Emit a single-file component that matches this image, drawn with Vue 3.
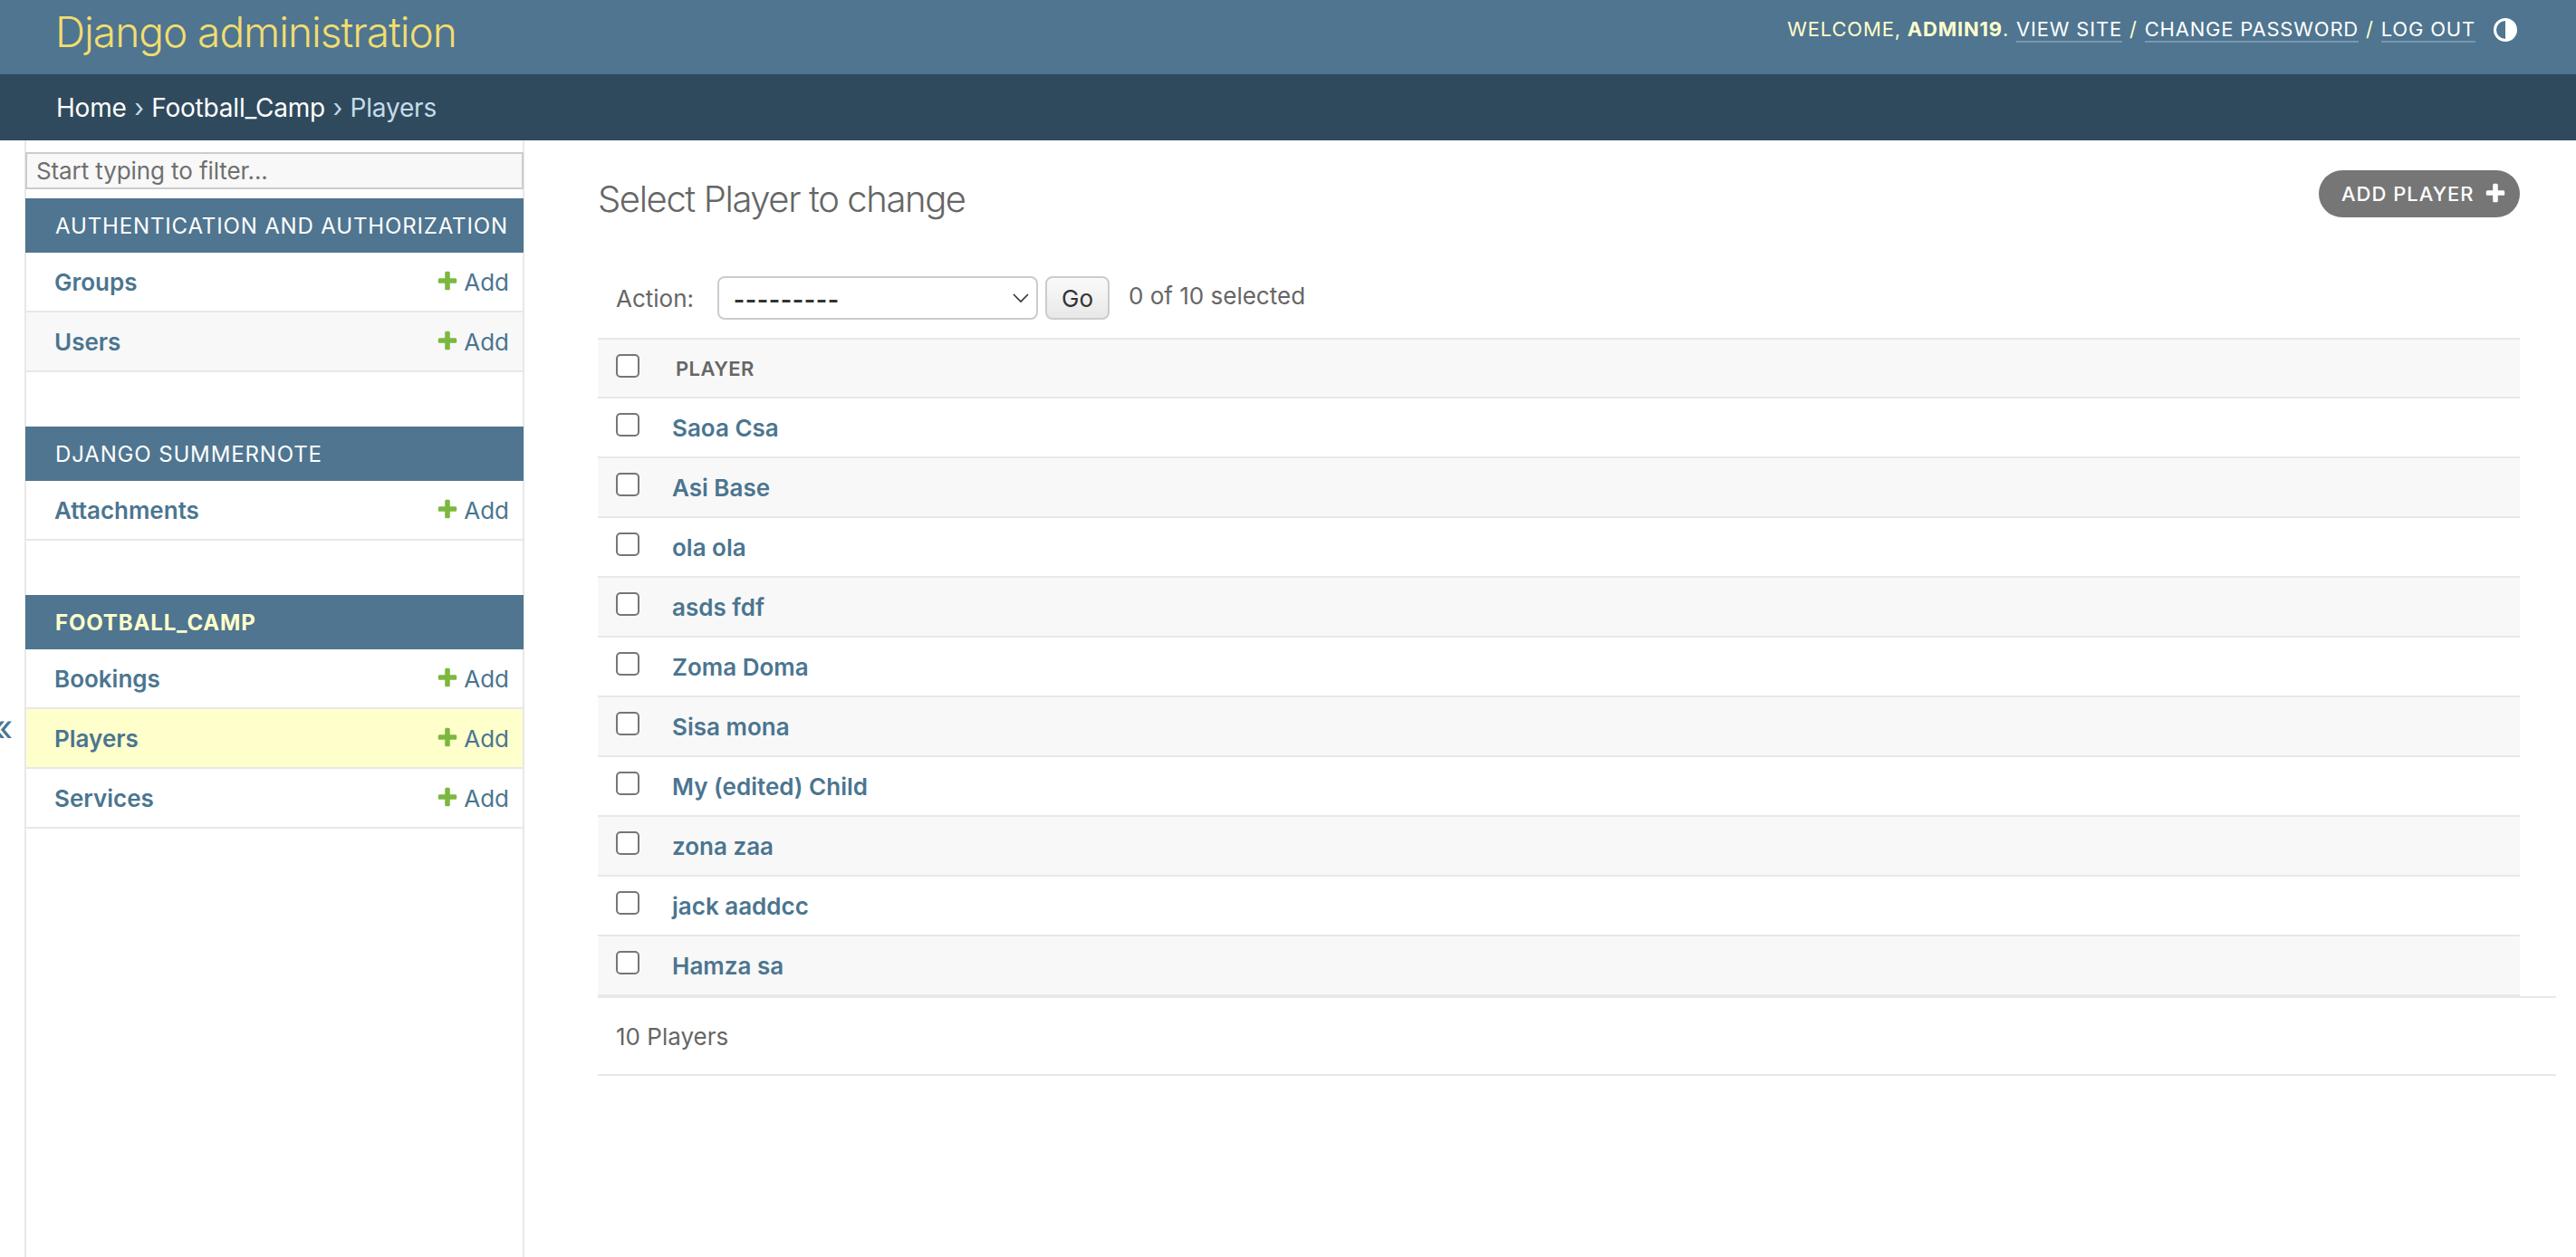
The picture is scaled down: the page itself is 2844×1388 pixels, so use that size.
<template>
  <header class="top">
    <div class="branding">Django administration</div>
    <div class="user-tools">
      <span>Welcome, <strong>admin19</strong>.</span>
      <a class="tool" href="#">View site</a>
      <span>/</span>
      <a class="tool" href="#">Change password</a>
      <span>/</span>
      <a class="tool" href="#">Log out</a>
      <svg class="theme" viewBox="0 0 26 26">
        <circle cx="13" cy="13" r="11.5" fill="none" stroke="#fff" stroke-width="3" />
        <path d="M13 1.5a11.5 11.5 0 0 1 0 23z" fill="#fff" />
      </svg>
    </div>
  </header>
  <nav class="crumbs">
    <a href="#">Home</a><span class="sep">›</span><a href="#">Football_Camp</a><span class="sep">›</span>Players
  </nav>
  <div class="page">
    <div class="toggle">«</div>
    <aside class="sidebar">
      <input class="filter" placeholder="Start typing to filter..." />
      <section v-for="app in apps" :key="app.name" class="app">
        <div class="caption" :class="{ current: app.current }">{{ app.name }}</div>
        <div
          v-for="(model, i) in app.models"
          :key="model"
          class="model"
          :class="{ alt: app.striped && i % 2 === 1, selected: model === 'Players' }"
        >
          <a class="model-name" href="#">{{ model }}</a>
          <a class="add" href="#">
            <svg viewBox="0 0 1792 1792"><path fill="#7cb83f" :d="plus" /></svg>
            Add
          </a>
        </div>
      </section>
    </aside>
    <main class="content">
      <div class="list">
        <div class="title-row">
          <h1>Select Player to change</h1>
          <a class="add-player" href="#">
            Add Player
            <svg viewBox="0 0 1792 1792"><path fill="#fff" :d="plus" /></svg>
          </a>
        </div>
        <div class="actions">
          <label>Action:</label>
          <select class="action-select"><option>---------</option></select>
          <button class="go">Go</button>
          <span class="counter">0 of 10 selected</span>
        </div>
        <table class="players">
          <thead>
            <tr>
              <th class="check"><input type="checkbox" /></th>
              <th class="name">Player</th>
            </tr>
          </thead>
          <tbody>
            <tr v-for="(player, i) in players" :key="player" :class="{ alt: i % 2 === 1 }">
              <td class="check"><input type="checkbox" /></td>
              <td><a href="#">{{ player }}</a></td>
            </tr>
          </tbody>
        </table>
      </div>
      <p class="paginator">10 Players</p>
    </main>
  </div>
</template>

<script setup>
const plus = 'M1600 736v192q0 40-28 68t-68 28h-416v416q0 40-28 68t-68 28h-192q-40 0-68-28t-28-68v-416h-416q-40 0-68-28t-28-68v-192q0-40 28-68t68-28h416v-416q0-40 28-68t68-28h192q40 0 68 28t28 68v416h416q40 0 68 28t28 68z'

const apps = [
  { name: 'Authentication and Authorization', models: ['Groups', 'Users'], striped: true },
  { name: 'Django Summernote', models: ['Attachments'] },
  { name: 'Football_Camp', models: ['Bookings', 'Players', 'Services'], current: true },
]

const players = [
  'Saoa Csa',
  'Asi Base',
  'ola ola',
  'asds fdf',
  'Zoma Doma',
  'Sisa mona',
  'My (edited) Child',
  'zona zaa',
  'jack aaddcc',
  'Hamza sa',
]
</script>

<style>
html, body {
  background: #fff;
}
</style>

<style scoped>
* {
  box-sizing: border-box;
}

a {
  color: #4b7590;
  text-decoration: none;
}

.top {
  height: 82px;
  background: #4f7590;
  display: flex;
  justify-content: space-between;
  padding: 0 65px 0 61px;
  font-family: Inter, "Liberation Sans", sans-serif;
}

.branding {
  font-size: 46px;
  font-weight: 300;
  letter-spacing: -1px;
  line-height: 70px;
  color: #f2dd6e;
}

.user-tools {
  display: flex;
  align-items: flex-start;
  gap: 8px;
  padding-top: 19px;
  font-size: 22px;
  line-height: 26px;
  letter-spacing: 0.8px;
  text-transform: uppercase;
  color: #ffffcc;
  white-space: nowrap;
}

.user-tools strong {
  font-weight: 700;
}

.tool {
  color: #fff;
  border-bottom: 2px solid rgba(255, 255, 255, 0.25);
  height: 28px;
}

.theme {
  width: 26px;
  height: 26px;
  margin-left: 12px;
  margin-top: 1px;
}

.crumbs {
  height: 73px;
  background: #2f4a5d;
  padding-left: 62px;
  line-height: 75px;
  font-family: Inter, "Liberation Sans", sans-serif;
  font-size: 28px;
  letter-spacing: -0.2px;
  color: #c4dce8;
}

.crumbs a {
  color: #fff;
}

.sep {
  margin: 0 8.5px;
}

.page {
  display: flex;
  min-height: 1233px;
  font-family: Inter, "Liberation Sans", sans-serif;
}

.toggle {
  width: 27px;
  flex: none;
  padding-top: 625px;
  font-size: 40px;
  line-height: 48px;
  color: #4b7590;
  overflow: hidden;
  text-indent: -9px;
}

.sidebar {
  width: 552px;
  flex: none;
  border-left: 2px solid #e8e8e8;
  border-right: 2px solid #e8e8e8;
  padding-top: 13px;
}

.filter {
  display: block;
  width: 550px;
  height: 41px;
  margin: 0 0 10px -1px;
  padding: 0 10px;
  border: 2px solid #ccc;
  background: #f8f8f8;
  font-family: inherit;
  font-size: 26px;
  letter-spacing: -0.1px;
  color: #666;
  border-radius: 0;
  outline: none;
}

.filter::placeholder {
  color: #6f6f6f;
  opacity: 1;
}

.app {
  margin-bottom: 60px;
}

.caption {
  height: 60px;
  margin: 0 -1px 0 -1px;
  padding-left: 33px;
  background: #4f7590;
  color: #fff;
  font-size: 24px;
  line-height: 62px;
  letter-spacing: 0.85px;
  text-transform: uppercase;
  white-space: nowrap;
}

.caption.current {
  color: #ffffcc;
  font-weight: 700;
}

.model {
  height: 66px;
  display: flex;
  justify-content: space-between;
  align-items: center;
  padding: 0 15px 0 31px;
  border-bottom: 2px solid #e8e8e8;
  font-size: 26px;
}

.model.alt {
  background: #f8f8f8;
}

.model.selected {
  background: #ffffcc;
}

.model-name {
  font-weight: 600;
}

.add {
  display: flex;
  align-items: center;
  gap: 5px;
}

.add svg {
  width: 26px;
  height: 26px;
}

.content {
  flex: 1;
  min-width: 0;
  padding: 33px 22px 0 81px;
  color: #666;
}

.list {
  padding-right: 40px;
}

.title-row {
  display: flex;
  justify-content: space-between;
  align-items: flex-start;
  height: 117px;
}

h1 {
  margin: 0;
  font-size: 40px;
  font-weight: 300;
  letter-spacing: -1.4px;
  line-height: 64px;
  color: #666;
}

.add-player {
  height: 52px;
  width: 222px;
  display: flex;
  align-items: center;
  justify-content: space-between;
  padding: 0 14px 0 25px;
  border-radius: 26px;
  background: #767676;
  color: #fff;
  font-size: 22px;
  font-weight: 500;
  letter-spacing: 1px;
  text-transform: uppercase;
}

.add-player svg {
  width: 26px;
  height: 26px;
}

.actions {
  display: flex;
  align-items: center;
  height: 48px;
  margin-bottom: 20px;
  font-size: 26px;
}

.actions label {
  margin-left: 20px;
  width: 112px;
}

.action-select {
  appearance: none;
  width: 354px;
  height: 48px;
  padding: 0 16px;
  border: 2px solid #ccc;
  border-radius: 8px;
  background: #fff url("data:image/svg+xml,%3Csvg xmlns='http://www.w3.org/2000/svg' width='18' height='12'%3E%3Cpath d='M1 2l8 8 8-8' fill='none' stroke='%23333' stroke-width='1.6'/%3E%3C/svg%3E") no-repeat right 8px center;
  font-family: "Liberation Sans", Arial, sans-serif;
  font-size: 36px;
  letter-spacing: 1px;
  color: #333;
}

.go {
  width: 71px;
  height: 48px;
  margin-left: 8px;
  padding: 0;
  border: 2px solid #ccc;
  border-radius: 8px;
  background: linear-gradient(#fafafa, #e8e8e8);
  font-family: inherit;
  font-size: 26px;
  color: #333;
}

.counter {
  margin-left: 21px;
  margin-top: -6px;
}

.players {
  width: 100%;
  border-collapse: separate;
  border-spacing: 0;
  font-size: 26px;
}

.players th {
  height: 67px;
  border-top: 2px solid #e8e8e8;
  border-bottom: 2px solid #e8e8e8;
  background: #f8f8f8;
  text-align: left;
  font-size: 22px;
  font-weight: 600;
  letter-spacing: 0.4px;
  text-transform: uppercase;
  color: #666;
}

.players th.name {
  padding-left: 4px;
}

.players td {
  height: 66px;
  border-bottom: 2px solid #e8e8e8;
}

.players tr.alt td {
  background: #f8f8f8;
}

.players td a {
  font-weight: 600;
  margin-left: -1px;
}

.check {
  width: 82px;
  padding: 0 0 6px 20px;
}

input[type="checkbox"] {
  appearance: none;
  display: block;
  width: 26px;
  height: 26px;
  margin: 0;
  border: 2px solid #767676;
  border-radius: 5px;
  background: #fff;
}

.paginator {
  margin: 0;
  height: 88px;
  padding-left: 20px;
  border-top: 2px solid #e8e8e8;
  border-bottom: 2px solid #e8e8e8;
  font-size: 26px;
  line-height: 86px;
  color: #666;
}
</style>
